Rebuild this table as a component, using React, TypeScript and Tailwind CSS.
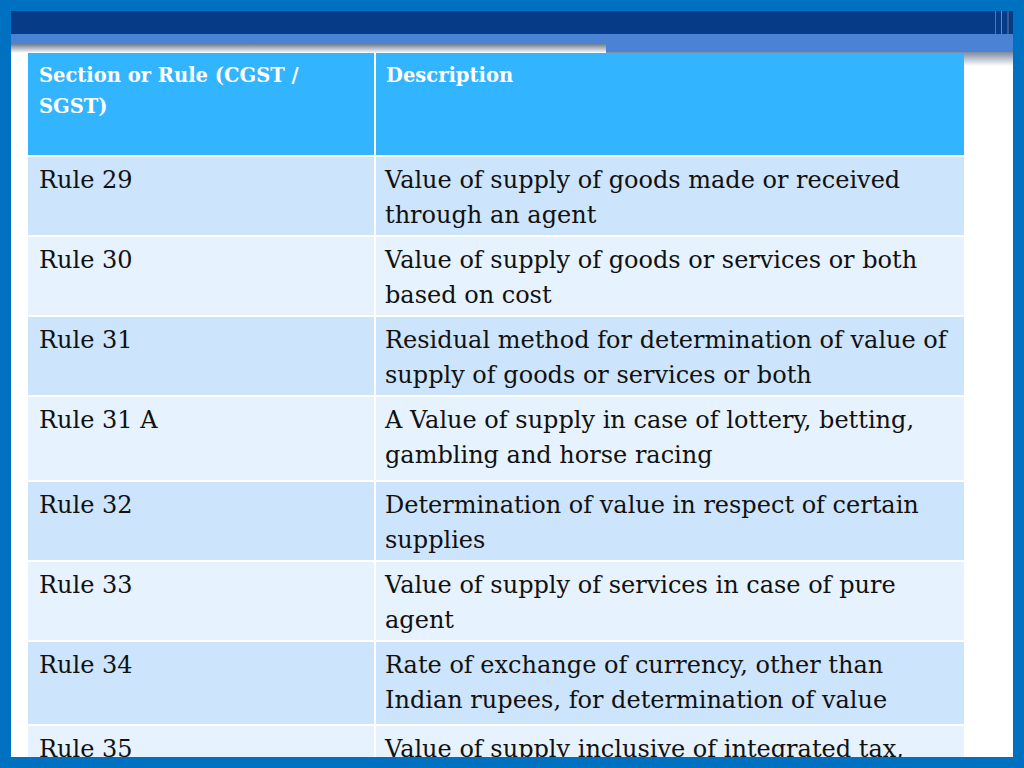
const rows = [
  { rule: 'Rule 29', desc: ['Value of supply of goods made or received', 'through an agent'], h: 'h-[78px]', bg: 'bg-[#cce4fc]' },
  { rule: 'Rule 30', desc: ['Value of supply of goods or services or both', 'based on cost'], h: 'h-[78px]', bg: 'bg-[#e6f2fd]' },
  { rule: 'Rule 31', desc: ['Residual method for determination of value of', 'supply of goods or services or both'], h: 'h-[78px]', bg: 'bg-[#cce4fc]' },
  { rule: 'Rule 31 A', desc: ['A Value of supply in case of lottery, betting,', 'gambling and horse racing'], h: 'h-[83px]', bg: 'bg-[#e6f2fd]' },
  { rule: 'Rule 32', desc: ['Determination of value in respect of certain', 'supplies'], h: 'h-[78px]', bg: 'bg-[#cce4fc]' },
  { rule: 'Rule 33', desc: ['Value of supply of services in case of pure', 'agent'], h: 'h-[78px]', bg: 'bg-[#e6f2fd]' },
  { rule: 'Rule 34', desc: ['Rate of exchange of currency, other than', 'Indian rupees, for determination of value'], h: 'h-[82px]', bg: 'bg-[#cce4fc]' },
  { rule: 'Rule 35', desc: ['Value of supply inclusive of integrated tax,', 'central tax, State tax, Union territory tax'], h: 'h-[78px]', bg: 'bg-[#e6f2fd]' },
];

export default function App() {
  return (
    <div className="w-[1024px] h-[768px] bg-[#0070c0] p-[11px]">
      <div className="w-full h-full bg-white overflow-hidden flex flex-col">
        {/* banner */}
        <div className="flex flex-col shrink-0">
          <div className="h-[23px] bg-[#063b87] flex justify-end gap-[5px] pr-[4px]">
            <div className="w-[1px] bg-white/30" />
            <div className="w-[1px] bg-white/40" />
            <div className="w-[2px] bg-[#5d6f8f]/60" />
          </div>
          <div className="flex">
            <div className="w-[595px] flex flex-col">
              <div className="h-[10px] bg-[#4a83d3]" />
              <div className="h-[9px] bg-gradient-to-b from-[#6f7f95] to-white" />
            </div>
            <div className="flex-1 flex flex-col">
              <div className="h-[18px] bg-[#4a83d3]" />
              <div className="h-[14px] bg-gradient-to-b from-[#7c8ba3] to-white" />
            </div>
          </div>
        </div>

        <div className="relative -mt-[13px] pl-[17px] font-['DejaVu_Serif',serif] text-[#111]">
          <div className="w-[936px] flex flex-col gap-[2px]">
            <div className="flex gap-[2px] h-[102px] bg-white">
              <div className="w-[346px] bg-[#33b4ff] pl-[11px] pt-[7px] text-[19.5px] leading-[31px] font-bold text-white">
                Section or Rule (CGST /<br />SGST)
              </div>
              <div className="flex-1 bg-[#33b4ff] pl-[10px] pt-[7px] text-[19.5px] leading-[31px] font-bold text-white">
                Description
              </div>
            </div>
            {rows.map((r) => (
              <div key={r.rule} className={`flex gap-[2px] ${r.h} shrink-0`}>
                <div className={`w-[346px] ${r.bg} pl-[11px] pt-[6px] text-[24px] leading-[35px] whitespace-nowrap`}>
                  {r.rule}
                </div>
                <div className={`flex-1 ${r.bg} pl-[9px] pt-[6px] text-[24px] leading-[35px] whitespace-nowrap`}>
                  {r.desc[0]}
                  <br />
                  {r.desc[1]}
                </div>
              </div>
            ))}
          </div>
        </div>
      </div>
    </div>
  );
}
